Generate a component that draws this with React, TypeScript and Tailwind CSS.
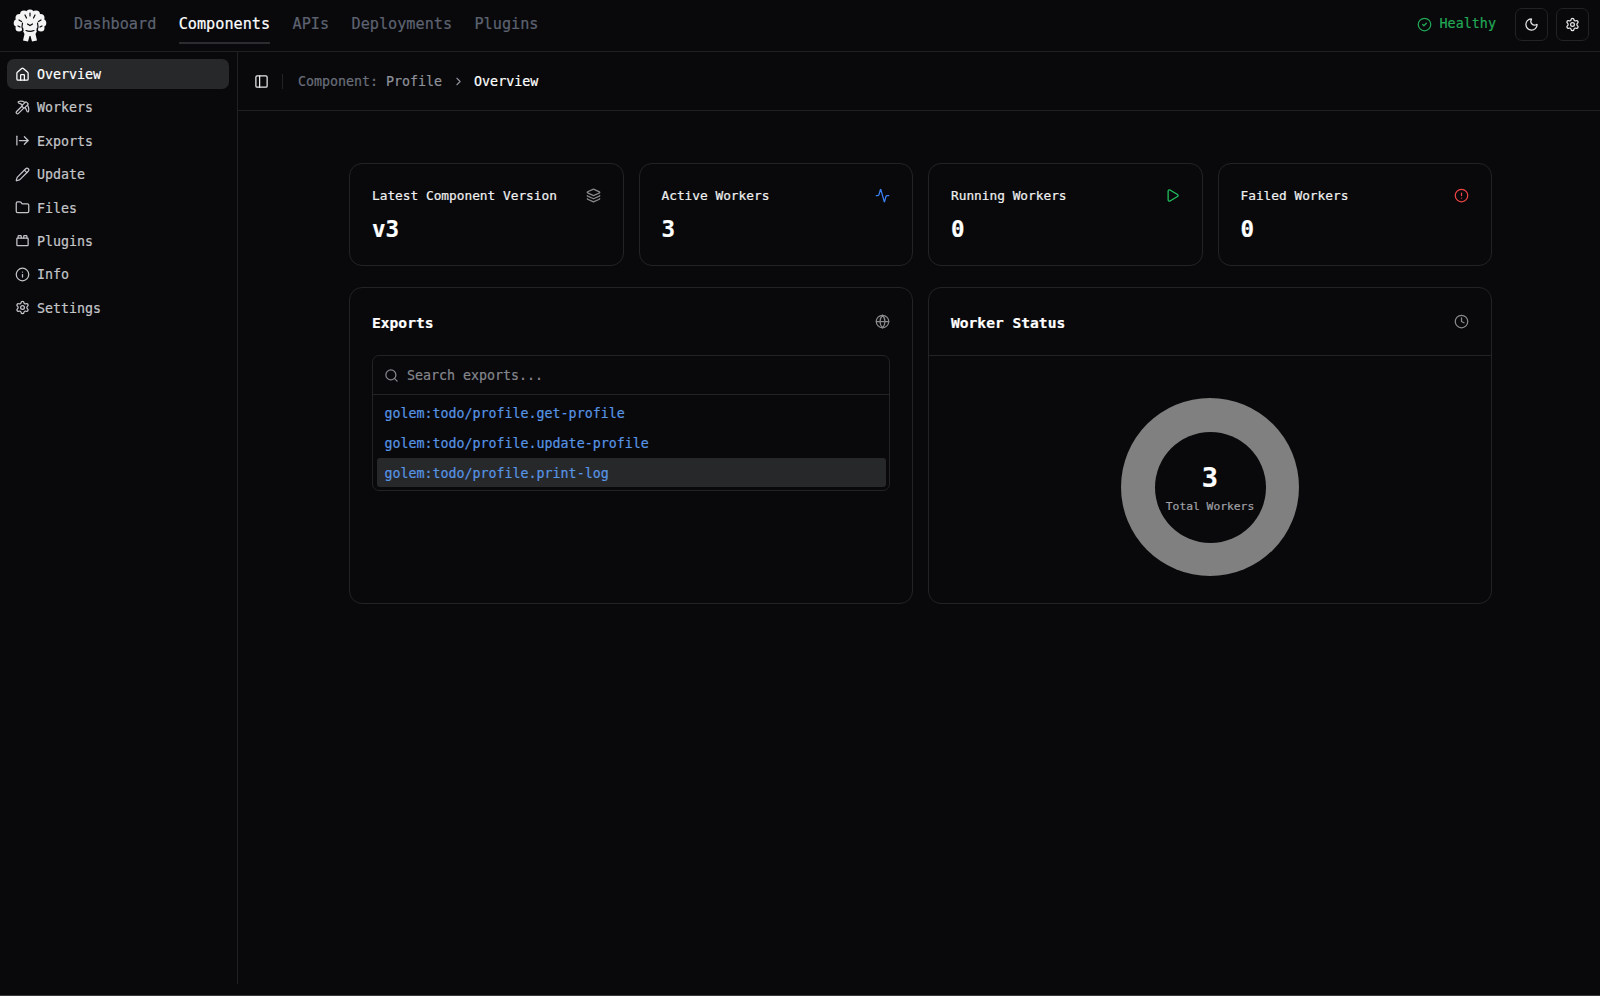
import {
	Activity,
	ArrowRightFromLine,
	ChevronRight,
	CircleAlert,
	CircleCheck,
	Clock,
	Folder,
	Globe,
	House,
	Info,
	Layers,
	Moon,
	PanelLeft,
	Pencil,
	Pickaxe,
	Play,
	Search,
	Settings,
	ToyBrick,
} from 'lucide-react';
import type {ReactNode} from 'react';

const navLinks = ['Dashboard', 'Components', 'APIs', 'Deployments', 'Plugins'];

const sideItems = [
	{label: 'Overview', icon: House},
	{label: 'Workers', icon: Pickaxe},
	{label: 'Exports', icon: ArrowRightFromLine},
	{label: 'Update', icon: Pencil},
	{label: 'Files', icon: Folder},
	{label: 'Plugins', icon: ToyBrick},
	{label: 'Info', icon: Info},
	{label: 'Settings', icon: Settings},
];

const stats = [
	{title: 'Latest Component Version', value: 'v3', icon: Layers, color: 'text-[#8a8a8a]'},
	{title: 'Active Workers', value: '3', icon: Activity, color: 'text-[#3b82f6]'},
	{title: 'Running Workers', value: '0', icon: Play, color: 'text-[#22c55e]'},
	{title: 'Failed Workers', value: '0', icon: CircleAlert, color: 'text-[#ef4444]'},
];

const exportsList = [
	'golem:todo/profile.get-profile',
	'golem:todo/profile.update-profile',
	'golem:todo/profile.print-log',
];

// canopy lobes of the tree golem
const lobes = [
	[17, 5, 4.5],
	[11, 5.5, 4],
	[23, 5.5, 4],
	[6.5, 9, 4],
	[27.5, 9, 4],
	[4.5, 14, 3.800],
	[29.5, 14, 3.800],
	[6, 19, 3.500],
	[28, 19, 3.500],
	[17, 12, 9],
	[11, 13, 6],
	[23, 13, 6],
];

const Logo = () => (
	<svg width="34" height="34" viewBox="0 0 34 34" aria-hidden="true">
		<g fill="#f4f4f4">
			{lobes.map(([cx, cy, r]) => (
				<circle key={`${cx}-${cy}`} cx={cx} cy={cy} r={r} />
			))}
			<path d="M11 14h12l1 8-1.500 3 1.500 6.500-5 1-1.500-5.500h-1l-1.500 5.500-5-1L11.500 25 10 22z" />
		</g>
		<path
			fill="none"
			stroke="#09090c"
			strokeWidth="1.200"
			strokeLinecap="round"
			d="M9.500 14c-.8 2.500-.8 5 .5 7.500M24.500 14c.8 2.500.8 5-.5 7.500M6 11l2.500 1.500M28 11l-2.500 1.500M12 6l1.500 3M22 6l-1.500 3M17 4v3M14.500 15l2.500 1.500 2.500-1.500M13 21.500c2.500 1 5.500 1 8 0M5 17l2 1M29 17l-2 1"
		/>
	</svg>
);

const Card = ({children, className}: {children: ReactNode; className: string}) => (
	<div className={`rounded-[13px] border border-[#222327] ${className}`}>{children}</div>
);

export default function App() {
	return (
		<div className="flex h-screen flex-col border-b border-[#3a3a3c] bg-[#09090c] font-['DejaVu_Sans_Mono',monospace] text-white [-webkit-text-stroke:0.2px]">
			<header className="flex h-[52px] shrink-0 items-center justify-between border-b border-[#1f2024] pr-[11px] pl-[13px]">
				<div className="flex items-center">
					<Logo />
					<nav className="ml-[27px] flex gap-[22.4px] text-[15.2px]">
						{navLinks.map((link) => (
							<a
								key={link}
								className={
									link === 'Components'
										? 'border-b-2 border-[#2b2c30] pt-[5px] pb-[6px] leading-[24px] text-white'
										: 'border-b-2 border-transparent pt-[5px] pb-[6px] leading-[24px] text-[#5d6370]'
								}
							>
								{link}
							</a>
						))}
					</nav>
				</div>
				<div className="mb-[2px] flex items-center">
					<CircleCheck size={15} strokeWidth={2} className="text-[#22a855]" />
					<span className="ml-[8px] text-[13.4px] font-medium text-[#22a855]">Healthy</span>
					<button className="ml-[19px] flex h-[33px] w-[33px] items-center justify-center rounded-[7px] border border-[#222327]">
						<Moon size={15} strokeWidth={2} className="text-[#e8e8e8]" />
					</button>
					<button className="ml-[8px] flex h-[33px] w-[33px] items-center justify-center rounded-[7px] border border-[#222327]">
						<Settings size={15} strokeWidth={2} className="text-[#e8e8e8]" />
					</button>
				</div>
			</header>

			<div className="flex min-h-0 flex-1 pb-[11px]">
				<aside className="w-[238px] shrink-0 border-r border-[#1f2024] pt-[7px] pr-[8px] pl-[7px]">
					<ul className="flex flex-col gap-[3.4px]">
						{sideItems.map(({label, icon: Icon}, i) => (
							<li
								key={label}
								className={
									i === 0
										? 'flex h-[30px] items-center gap-[7px] rounded-[7px] bg-[#27282a] pl-[8px] text-[13.3px] text-white'
										: 'flex h-[30px] items-center gap-[7px] rounded-[7px] pl-[8px] text-[13.3px] text-[#c4c5c8]'
								}
							>
								<Icon size={15} strokeWidth={2} />
								<span className="pt-[2px]">{label}</span>
							</li>
						))}
					</ul>
				</aside>

				<main className="min-w-0 flex-1">
					<div className="flex h-[59px] items-center border-b border-[#1f2024] pl-[16px] text-[13.3px]">
						<PanelLeft size={15} strokeWidth={2} className="text-[#e8e8e8]" />
						<div className="mr-[15px] ml-[13px] h-[15px] w-px bg-[#222327]" />
						<span className="pt-[2px] text-[#6a6f7a]">
							Component: <span className="text-[#8f929a]">Profile</span>
						</span>
						<ChevronRight size={13} strokeWidth={2} className="mr-[9px] ml-[10px] text-[#8f929a]" />
						<span className="pt-[2px] text-white">Overview</span>
					</div>

					<div className="w-[1254px] pt-[52px] pl-[111px]">
						<div className="grid grid-cols-4 gap-[15px]">
							{stats.map(({title, value, icon: Icon, color}) => (
								<Card key={title} className="h-[103px] px-[22px] pt-[21px]">
									<div className="flex h-[21px] items-center justify-between text-[12.8px] font-medium text-[#f0f0f0]">
										{title}
										<Icon size={15} strokeWidth={2} className={color} />
									</div>
									<div className="mt-[8px] text-[22.5px] leading-[30px] font-bold text-white">{value}</div>
								</Card>
							))}
						</div>

						<div className="mt-[21px] grid grid-cols-2 gap-[15px]">
							<Card className="h-[317px] px-[22px]">
								<div className="flex h-[67px] items-center justify-between text-[14.6px] font-semibold text-white">
									<span className="pt-[2px]">Exports</span>
									<Globe size={15} strokeWidth={2} className="text-[#8a8a8a]" />
								</div>
								<div className="rounded-[7px] border border-[#222327]">
									<div className="flex h-[39px] items-center gap-[8px] border-b border-[#222327] pl-[11px] text-[13.3px] text-[#85878c]">
										<Search size={15} strokeWidth={2} className="text-[#85878c]" />
										<span className="pt-[2px]">Search exports...</span>
									</div>
									<ul className="px-[3.5px] py-[3px]">
										{exportsList.map((name, i) => (
											<li
												key={name}
												className={
													i === 2
														? 'flex h-[29.8px] items-center rounded-[3px] bg-[#27282a] pt-[2px] pl-[8px] text-[13.3px] text-[#5794e4]'
														: 'flex h-[29.8px] items-center rounded-[3px] pt-[2px] pl-[8px] text-[13.3px] text-[#5794e4]'
												}
											>
												{name}
											</li>
										))}
									</ul>
								</div>
							</Card>

							<Card className="h-[317px]">
								<div className="flex h-[68px] items-center justify-between border-b border-[#222327] px-[22px] text-[14.6px] font-semibold text-white">
									<span className="pt-[2px]">Worker Status</span>
									<Clock size={15} strokeWidth={2} className="text-[#8a8a8a]" />
								</div>
								<div className="flex justify-center pt-[42px]">
									<div className="flex h-[178px] w-[178px] items-center justify-center rounded-full bg-[#808080]">
										<div className="flex h-[111px] w-[111px] flex-col items-center rounded-full bg-[#09090c] pt-[29px]">
											<span className="text-[27px] leading-[34px] font-bold text-white">3</span>
											<span className="mt-[4px] text-[11.3px] leading-[15px] text-[#a1a1a6]">Total Workers</span>
										</div>
									</div>
								</div>
							</Card>
						</div>
					</div>
				</main>
			</div>
		</div>
	);
}
